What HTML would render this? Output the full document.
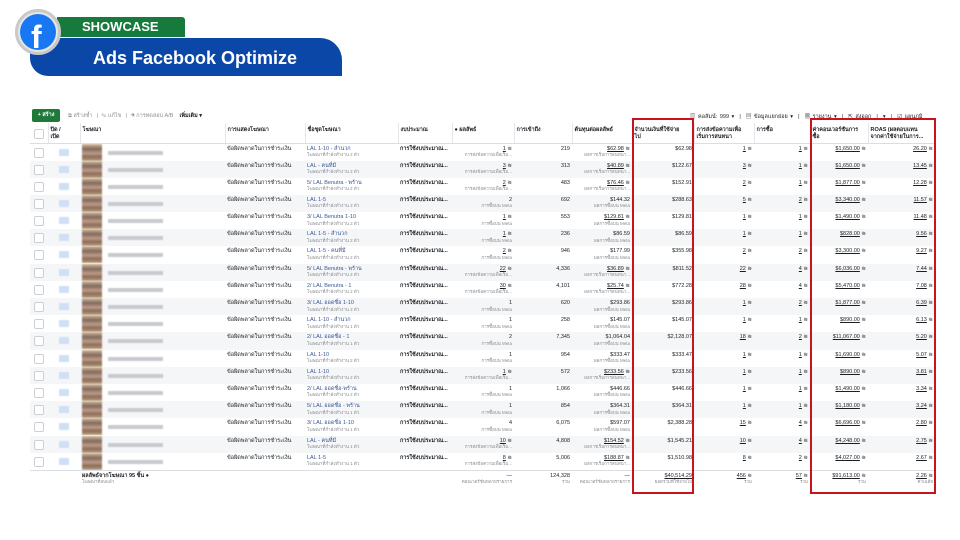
<!DOCTYPE html>
<html><head><meta charset="utf-8">
<style>
*{margin:0;padding:0;box-sizing:border-box}
body{width:960px;height:540px;background:#fff;position:relative;overflow:hidden;font-family:"Liberation Sans","Noto Sans CJK SC",sans-serif;color:#1c1e21}
.abs{position:absolute}
table{position:absolute;left:30px;top:123px;width:905px;border-collapse:collapse;table-layout:fixed;font-size:5.5px}
td,th{height:17.2px;overflow:hidden;white-space:nowrap;vertical-align:top;padding:2px 2px 0;line-height:6.5px}
th{height:20px;font-weight:bold;text-align:left;border-bottom:1px solid #dadde1;border-right:1px solid #e4e6eb;font-size:5.5px;padding-top:4px}
tbody tr:nth-child(even) td{background:#f5f6f8}
.r{text-align:right}
.s{color:#8a8d91;font-size:4.5px;display:block}
.b{color:#385898}
.u{text-decoration:underline}
.cb{width:10px;height:10px;border:1px solid #ccd0d5;border-radius:2px;margin:2px 0 0 2px;background:#fff}
.tg{width:10px;height:7px;background:#cfe0f5;margin:3px 0 0 9px;filter:blur(.6px)}
.th{width:20px;height:17px;float:left;margin-top:-2px;background:linear-gradient(180deg,#d8b89a,#7c6a5e 30%,#c09a88 55%,#8a6b5a 75%,#b9a27c);filter:blur(.8px)}
.nm{float:left;width:55px;height:4px;background:#c8cacf;margin:5px 0 0 6px;filter:blur(.6px)}
tfoot td{height:25px;border-top:1px solid #dadde1;background:#fff}
</style></head><body>
<!-- banner -->
<div class="abs" style="left:30px;top:38px;width:312px;height:38px;background:#0b47a6;border-radius:0 22px 0 18px"></div>
<div class="abs" style="left:57px;top:17px;width:128px;height:20px;background:#157a3c;border-radius:0 3px 0 0"></div>
<div class="abs" style="left:82px;top:19px;color:#fff;font-weight:bold;font-size:13px">SHOWCASE</div>
<div class="abs" style="left:93px;top:48px;color:#fff;font-weight:bold;font-size:18px">Ads Facebook Optimize</div>
<div class="abs" style="left:15px;top:9px;width:46px;height:46px;border-radius:50%;background:#e6e6e6;border:3px solid #c9c9c9"></div>
<div class="abs" style="left:20px;top:14px;width:36px;height:36px;border-radius:50%;background:#1877f2;overflow:hidden"><div style="position:absolute;left:11px;top:6px;color:#fff;font-weight:bold;font-size:32px;line-height:34px;font-family:'Liberation Sans',sans-serif">f</div></div>
<!-- toolbar -->
<div class="abs" style="left:32px;top:109px;width:28px;height:13px;background:#1f7a3a;border-radius:2px;color:#fff;font-size:5.5px;line-height:13px;text-align:center;font-weight:bold">+ สร้าง</div>
<div class="abs" style="left:68px;top:112px;font-size:5.5px;color:#8a8d91">⧉ สร้างซ้ำ &nbsp;&nbsp;|&nbsp; ✎ แก้ไข &nbsp;&nbsp;|&nbsp; ⚗ การทดสอบ A/B &nbsp;&nbsp; <b style="color:#1c1e21">เพิ่มเติม ▾</b></div>
<div class="abs" style="left:690px;top:112px;font-size:5.5px;color:#1c1e21;word-spacing:1px">▥ คอลัมน์: 999 ▾ &nbsp;|&nbsp; ▤ ข้อมูลแยกย่อย ▾ &nbsp;|&nbsp; ▦ รายงาน ▾ &nbsp;|&nbsp; ⇱ ส่งออก &nbsp;|&nbsp; ▾ &nbsp;|&nbsp; ☑ แผนภูมิ</div>
<table>
<colgroup><col style="width:18px"><col style="width:32px"><col style="width:145px"><col style="width:80px"><col style="width:93px"><col style="width:54px"><col style="width:62px"><col style="width:58px"><col style="width:60px"><col style="width:62px"><col style="width:60px"><col style="width:56px"><col style="width:58px"><col style="width:67px"></colgroup>
<thead><tr><th><div class="cb"></div></th><th>ปิด /<br>เปิด</th><th>โฆษณา</th><th>การแสดงโฆษณา</th><th>ชื่อชุดโฆษณา</th><th>งบประมาณ</th><th>● ผลลัพธ์</th><th>การเข้าถึง</th><th>ต้นทุนต่อผลลัพธ์</th><th>จำนวนเงินที่ใช้จ่าย<br>ไป</th><th>การส่งข้อความเพื่อ<br>เริ่มการสนทนา</th><th>การซื้อ</th><th>ค่าคอนเวอร์ชันการ<br>ซื้อ</th><th>ROAS (ผลตอบแทน<br>จากค่าใช้จ่ายในการ...</th></tr></thead>
<tbody>
<tr><td><div class="cb"></div></td><td><div class="tg"></div></td><td><div class="th"></div><div class="nm"></div></td><td>ข้อผิดพลาดในการชำระเงิน</td><td><span class="b">LAL 1-10 - สำนวก</span><span class="s">โฆษณาที่กำลังทำงาน 2 ตัว</span></td><td><b>การใช้งบประมาณ...</b></td><td class="r"><span class="u">1</span> ≋<span class="s">การส่งข้อความเพื่อเริ่ม...</span></td><td class="r">219</td><td class="r"><span class="u">$62.98</span> ≋<span class="s">ผลการเริ่มการสนทนา...</span></td><td class="r">$62.98</td><td class="r"><span class="u">1</span> ≋</td><td class="r"><span class="u">1</span> ≋</td><td class="r"><span class="u">$1,650.00</span> ≋</td><td class="r"><span class="u">26.20</span> ≋</td></tr>
<tr><td><div class="cb"></div></td><td><div class="tg"></div></td><td><div class="th"></div><div class="nm"></div></td><td>ข้อผิดพลาดในการชำระเงิน</td><td><span class="b">LAL - คนที่มี</span><span class="s">โฆษณาที่กำลังทำงาน 2 ตัว</span></td><td><b>การใช้งบประมาณ...</b></td><td class="r"><span class="u">3</span> ≋<span class="s">การส่งข้อความเพื่อเริ่ม...</span></td><td class="r">313</td><td class="r"><span class="u">$40.89</span> ≋<span class="s">ผลการเริ่มการสนทนา...</span></td><td class="r">$122.67</td><td class="r"><span class="u">3</span> ≋</td><td class="r"><span class="u">1</span> ≋</td><td class="r"><span class="u">$1,650.00</span> ≋</td><td class="r"><span class="u">13.45</span> ≋</td></tr>
<tr><td><div class="cb"></div></td><td><div class="tg"></div></td><td><div class="th"></div><div class="nm"></div></td><td>ข้อผิดพลาดในการชำระเงิน</td><td><span class="b">5/ LAL Benutra - พร้าน</span><span class="s">โฆษณาที่กำลังทำงาน 2 ตัว</span></td><td><b>การใช้งบประมาณ...</b></td><td class="r"><span class="u">2</span> ≋<span class="s">การส่งข้อความเพื่อเริ่ม...</span></td><td class="r">483</td><td class="r"><span class="u">$76.46</span> ≋<span class="s">ผลการเริ่มการสนทนา...</span></td><td class="r">$152.91</td><td class="r"><span class="u">2</span> ≋</td><td class="r"><span class="u">1</span> ≋</td><td class="r"><span class="u">$1,877.00</span> ≋</td><td class="r"><span class="u">12.28</span> ≋</td></tr>
<tr><td><div class="cb"></div></td><td><div class="tg"></div></td><td><div class="th"></div><div class="nm"></div></td><td>ข้อผิดพลาดในการชำระเงิน</td><td><span class="b">LAL 1-5</span><span class="s">โฆษณาที่กำลังทำงาน 2 ตัว</span></td><td><b>การใช้งบประมาณ...</b></td><td class="r">2<span class="s">การซื้อบน Meta</span></td><td class="r">692</td><td class="r">$144.32<span class="s">ผลการซื้อบน Meta</span></td><td class="r">$288.63</td><td class="r"><span class="u">5</span> ≋</td><td class="r"><span class="u">2</span> ≋</td><td class="r"><span class="u">$3,340.00</span> ≋</td><td class="r"><span class="u">11.57</span> ≋</td></tr>
<tr><td><div class="cb"></div></td><td><div class="tg"></div></td><td><div class="th"></div><div class="nm"></div></td><td>ข้อผิดพลาดในการชำระเงิน</td><td><span class="b">3/ LAL Benutra 1-10</span><span class="s">โฆษณาที่กำลังทำงาน 2 ตัว</span></td><td><b>การใช้งบประมาณ...</b></td><td class="r"><span class="u">1</span> ≋<span class="s">การซื้อบน Meta</span></td><td class="r">553</td><td class="r"><span class="u">$129.81</span> ≋<span class="s">ผลการซื้อบน Meta</span></td><td class="r">$129.81</td><td class="r"><span class="u">1</span> ≋</td><td class="r"><span class="u">1</span> ≋</td><td class="r"><span class="u">$1,490.00</span> ≋</td><td class="r"><span class="u">11.48</span> ≋</td></tr>
<tr><td><div class="cb"></div></td><td><div class="tg"></div></td><td><div class="th"></div><div class="nm"></div></td><td>ข้อผิดพลาดในการชำระเงิน</td><td><span class="b">LAL 1-5 - สำนวก</span><span class="s">โฆษณาที่กำลังทำงาน 2 ตัว</span></td><td><b>การใช้งบประมาณ...</b></td><td class="r"><span class="u">1</span> ≋<span class="s">การซื้อบน Meta</span></td><td class="r">236</td><td class="r">$86.59<span class="s">ผลการซื้อบน Meta</span></td><td class="r">$86.59</td><td class="r"><span class="u">1</span> ≋</td><td class="r"><span class="u">1</span> ≋</td><td class="r"><span class="u">$828.00</span> ≋</td><td class="r"><span class="u">9.56</span> ≋</td></tr>
<tr><td><div class="cb"></div></td><td><div class="tg"></div></td><td><div class="th"></div><div class="nm"></div></td><td>ข้อผิดพลาดในการชำระเงิน</td><td><span class="b">LAL 1-5 - คนที่มี</span><span class="s">โฆษณาที่กำลังทำงาน 2 ตัว</span></td><td><b>การใช้งบประมาณ...</b></td><td class="r"><span class="u">2</span> ≋<span class="s">การซื้อบน Meta</span></td><td class="r">946</td><td class="r">$177.99<span class="s">ผลการซื้อบน Meta</span></td><td class="r">$355.98</td><td class="r"><span class="u">2</span> ≋</td><td class="r"><span class="u">2</span> ≋</td><td class="r"><span class="u">$3,300.00</span> ≋</td><td class="r"><span class="u">9.27</span> ≋</td></tr>
<tr><td><div class="cb"></div></td><td><div class="tg"></div></td><td><div class="th"></div><div class="nm"></div></td><td>ข้อผิดพลาดในการชำระเงิน</td><td><span class="b">5/ LAL Benutra - พร้าน</span><span class="s">โฆษณาที่กำลังทำงาน 2 ตัว</span></td><td><b>การใช้งบประมาณ...</b></td><td class="r"><span class="u">22</span> ≋<span class="s">การส่งข้อความเพื่อเริ่ม...</span></td><td class="r">4,336</td><td class="r"><span class="u">$36.89</span> ≋<span class="s">ผลการเริ่มการสนทนา...</span></td><td class="r">$811.52</td><td class="r"><span class="u">22</span> ≋</td><td class="r"><span class="u">4</span> ≋</td><td class="r"><span class="u">$6,036.00</span> ≋</td><td class="r"><span class="u">7.44</span> ≋</td></tr>
<tr><td><div class="cb"></div></td><td><div class="tg"></div></td><td><div class="th"></div><div class="nm"></div></td><td>ข้อผิดพลาดในการชำระเงิน</td><td><span class="b">2/ LAL Benutra - 1</span><span class="s">โฆษณาที่กำลังทำงาน 2 ตัว</span></td><td><b>การใช้งบประมาณ...</b></td><td class="r"><span class="u">30</span> ≋<span class="s">การส่งข้อความเพื่อเริ่ม...</span></td><td class="r">4,101</td><td class="r"><span class="u">$25.74</span> ≋<span class="s">ผลการเริ่มการสนทนา...</span></td><td class="r">$772.28</td><td class="r"><span class="u">28</span> ≋</td><td class="r"><span class="u">4</span> ≋</td><td class="r"><span class="u">$5,470.00</span> ≋</td><td class="r"><span class="u">7.08</span> ≋</td></tr>
<tr><td><div class="cb"></div></td><td><div class="tg"></div></td><td><div class="th"></div><div class="nm"></div></td><td>ข้อผิดพลาดในการชำระเงิน</td><td><span class="b">3/ LAL ออดชื่อ 1-10</span><span class="s">โฆษณาที่กำลังทำงาน 2 ตัว</span></td><td><b>การใช้งบประมาณ...</b></td><td class="r">1<span class="s">การซื้อบน Meta</span></td><td class="r">620</td><td class="r">$293.86<span class="s">ผลการซื้อบน Meta</span></td><td class="r">$293.86</td><td class="r"><span class="u">1</span> ≋</td><td class="r"><span class="u">2</span> ≋</td><td class="r"><span class="u">$1,877.00</span> ≋</td><td class="r"><span class="u">6.39</span> ≋</td></tr>
<tr><td><div class="cb"></div></td><td><div class="tg"></div></td><td><div class="th"></div><div class="nm"></div></td><td>ข้อผิดพลาดในการชำระเงิน</td><td><span class="b">LAL 1-10 - สำนวก</span><span class="s">โฆษณาที่กำลังทำงาน 1 ตัว</span></td><td><b>การใช้งบประมาณ...</b></td><td class="r">1<span class="s">การซื้อบน Meta</span></td><td class="r">258</td><td class="r">$145.07<span class="s">ผลการซื้อบน Meta</span></td><td class="r">$145.07</td><td class="r"><span class="u">1</span> ≋</td><td class="r"><span class="u">1</span> ≋</td><td class="r"><span class="u">$890.00</span> ≋</td><td class="r"><span class="u">6.13</span> ≋</td></tr>
<tr><td><div class="cb"></div></td><td><div class="tg"></div></td><td><div class="th"></div><div class="nm"></div></td><td>ข้อผิดพลาดในการชำระเงิน</td><td><span class="b">2/ LAL ออดชื่อ - 1</span><span class="s">โฆษณาที่กำลังทำงาน 1 ตัว</span></td><td><b>การใช้งบประมาณ...</b></td><td class="r">2<span class="s">การซื้อบน Meta</span></td><td class="r">7,345</td><td class="r">$1,064.04<span class="s">ผลการซื้อบน Meta</span></td><td class="r">$2,128.07</td><td class="r"><span class="u">18</span> ≋</td><td class="r"><span class="u">2</span> ≋</td><td class="r"><span class="u">$11,067.00</span> ≋</td><td class="r"><span class="u">5.20</span> ≋</td></tr>
<tr><td><div class="cb"></div></td><td><div class="tg"></div></td><td><div class="th"></div><div class="nm"></div></td><td>ข้อผิดพลาดในการชำระเงิน</td><td><span class="b">LAL 1-10</span><span class="s">โฆษณาที่กำลังทำงาน 2 ตัว</span></td><td><b>การใช้งบประมาณ...</b></td><td class="r">1<span class="s">การซื้อบน Meta</span></td><td class="r">954</td><td class="r">$333.47<span class="s">ผลการซื้อบน Meta</span></td><td class="r">$333.47</td><td class="r"><span class="u">1</span> ≋</td><td class="r"><span class="u">1</span> ≋</td><td class="r"><span class="u">$1,690.00</span> ≋</td><td class="r"><span class="u">5.07</span> ≋</td></tr>
<tr><td><div class="cb"></div></td><td><div class="tg"></div></td><td><div class="th"></div><div class="nm"></div></td><td>ข้อผิดพลาดในการชำระเงิน</td><td><span class="b">LAL 1-10</span><span class="s">โฆษณาที่กำลังทำงาน 2 ตัว</span></td><td><b>การใช้งบประมาณ...</b></td><td class="r"><span class="u">1</span> ≋<span class="s">การส่งข้อความเพื่อเริ่ม...</span></td><td class="r">572</td><td class="r"><span class="u">$233.56</span> ≋<span class="s">ผลการเริ่มการสนทนา...</span></td><td class="r">$233.56</td><td class="r"><span class="u">1</span> ≋</td><td class="r"><span class="u">1</span> ≋</td><td class="r"><span class="u">$890.00</span> ≋</td><td class="r"><span class="u">3.81</span> ≋</td></tr>
<tr><td><div class="cb"></div></td><td><div class="tg"></div></td><td><div class="th"></div><div class="nm"></div></td><td>ข้อผิดพลาดในการชำระเงิน</td><td><span class="b">2/ LAL ออดชื่อ-พร้าน</span><span class="s">โฆษณาที่กำลังทำงาน 2 ตัว</span></td><td><b>การใช้งบประมาณ...</b></td><td class="r">1<span class="s">การซื้อบน Meta</span></td><td class="r">1,066</td><td class="r">$446.66<span class="s">ผลการซื้อบน Meta</span></td><td class="r">$446.66</td><td class="r"><span class="u">1</span> ≋</td><td class="r"><span class="u">1</span> ≋</td><td class="r"><span class="u">$1,490.00</span> ≋</td><td class="r"><span class="u">3.34</span> ≋</td></tr>
<tr><td><div class="cb"></div></td><td><div class="tg"></div></td><td><div class="th"></div><div class="nm"></div></td><td>ข้อผิดพลาดในการชำระเงิน</td><td><span class="b">5/ LAL ออดชื่อ - พร้าน</span><span class="s">โฆษณาที่กำลังทำงาน 1 ตัว</span></td><td><b>การใช้งบประมาณ...</b></td><td class="r">1<span class="s">การซื้อบน Meta</span></td><td class="r">854</td><td class="r">$364.31<span class="s">ผลการซื้อบน Meta</span></td><td class="r">$364.31</td><td class="r"><span class="u">1</span> ≋</td><td class="r"><span class="u">1</span> ≋</td><td class="r"><span class="u">$1,180.00</span> ≋</td><td class="r"><span class="u">3.24</span> ≋</td></tr>
<tr><td><div class="cb"></div></td><td><div class="tg"></div></td><td><div class="th"></div><div class="nm"></div></td><td>ข้อผิดพลาดในการชำระเงิน</td><td><span class="b">3/ LAL ออดชื่อ 1-10</span><span class="s">โฆษณาที่กำลังทำงาน 1 ตัว</span></td><td><b>การใช้งบประมาณ...</b></td><td class="r">4<span class="s">การซื้อบน Meta</span></td><td class="r">6,075</td><td class="r">$597.07<span class="s">ผลการซื้อบน Meta</span></td><td class="r">$2,388.28</td><td class="r"><span class="u">15</span> ≋</td><td class="r"><span class="u">4</span> ≋</td><td class="r"><span class="u">$6,696.00</span> ≋</td><td class="r"><span class="u">2.80</span> ≋</td></tr>
<tr><td><div class="cb"></div></td><td><div class="tg"></div></td><td><div class="th"></div><div class="nm"></div></td><td>ข้อผิดพลาดในการชำระเงิน</td><td><span class="b">LAL - คนที่มี</span><span class="s">โฆษณาที่กำลังทำงาน 1 ตัว</span></td><td><b>การใช้งบประมาณ...</b></td><td class="r"><span class="u">10</span> ≋<span class="s">การส่งข้อความเพื่อเริ่ม...</span></td><td class="r">4,808</td><td class="r"><span class="u">$154.52</span> ≋<span class="s">ผลการเริ่มการสนทนา...</span></td><td class="r">$1,545.21</td><td class="r"><span class="u">10</span> ≋</td><td class="r"><span class="u">4</span> ≋</td><td class="r"><span class="u">$4,248.00</span> ≋</td><td class="r"><span class="u">2.75</span> ≋</td></tr>
<tr><td><div class="cb"></div></td><td><div class="tg"></div></td><td><div class="th"></div><div class="nm"></div></td><td>ข้อผิดพลาดในการชำระเงิน</td><td><span class="b">LAL 1-5</span><span class="s">โฆษณาที่กำลังทำงาน 1 ตัว</span></td><td><b>การใช้งบประมาณ...</b></td><td class="r"><span class="u">8</span> ≋<span class="s">การส่งข้อความเพื่อเริ่ม...</span></td><td class="r">5,006</td><td class="r"><span class="u">$188.87</span> ≋<span class="s">ผลการเริ่มการสนทนา...</span></td><td class="r">$1,510.98</td><td class="r"><span class="u">8</span> ≋</td><td class="r"><span class="u">2</span> ≋</td><td class="r"><span class="u">$4,027.00</span> ≋</td><td class="r"><span class="u">2.67</span> ≋</td></tr>
</tbody>
<tfoot><tr><td></td><td></td><td><b>ผลลัพธ์จากโฆษณา 95 ชิ้น ●</b><span class="s">โฆษณาที่ลบแล้ว</span></td><td></td><td></td><td></td><td class="r">—<span class="s">คอนเวอร์ชันหลายรายการ</span></td><td class="r">124,328<span class="s">รวม</span></td><td class="r">—<span class="s">คอนเวอร์ชันหลายรายการ</span></td><td class="r"><span class="u">$40,514.29</span><span class="s">ยอดรวมที่ใช้จ่ายไป</span></td><td class="r"><span class="u">456</span> ≋<span class="s">รวม</span></td><td class="r"><span class="u">57</span> ≋<span class="s">รวม</span></td><td class="r"><span class="u">$91,613.00</span> ≋<span class="s">รวม</span></td><td class="r"><span class="u">2.26</span> ≋<span class="s">ค่าเฉลี่ย</span></td></tr></tfoot>
</table>
<div class="abs" style="left:632px;top:118px;width:62px;height:376px;border:2px solid #c8141b"></div>
<div class="abs" style="left:810px;top:118px;width:126px;height:376px;border:2px solid #c8141b"></div>
</body></html>
